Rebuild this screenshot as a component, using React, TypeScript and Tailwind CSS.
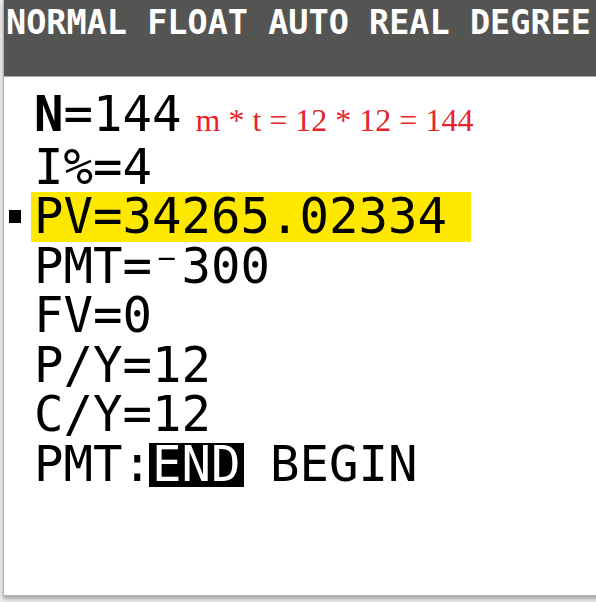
import React from "react";

const mono = { fontFamily: '"DejaVu Sans Mono", "Liberation Mono", monospace' };

const Row = ({ children, marker = false }: { children: React.ReactNode; marker?: boolean }) => (
  <div className="flex h-[49.5px] items-center">
    <div className="w-[30px] shrink-0 pl-[5px]">
      {marker && <div className="h-[13px] w-[12px] bg-black" />}
    </div>
    <div className="whitespace-pre text-[49px] leading-[49.5px] text-black">{children}</div>
  </div>
);

export default function App() {
  return (
    <div className="h-[602px] w-[596px] overflow-hidden bg-[#eeeeee]" style={mono}>
      <div className="ml-[3px] h-[596px] w-[600px] border-b border-l border-[#b3b3b3] bg-white shadow-[0_3px_4px_rgba(0,0,0,0.3)]">
        {/* status bar */}
        <div className="h-[77px] border-b border-[#a9a9a9] bg-[#545553] pl-[2px] pt-[4px]">
          <div className="whitespace-pre text-[33.5px] font-bold leading-[38px] text-white">
            NORMAL FLOAT AUTO REAL DEGREE
          </div>
        </div>

        {/* TVM solver */}
        <div className="pt-[16px]">
          <Row>
            <span className="font-bold">N</span>=144
            <span
              className="ml-[14px] text-[32px] text-[#e8232a]"
              style={{ fontFamily: '"Liberation Serif", "Times New Roman", serif' }}
            >
              m * t = 12 * 12 = 144
            </span>
          </Row>
          <Row>I%=4</Row>
          <Row marker>
            <span className="-ml-[3px] inline-block bg-[#ffe800] pl-[3px] pr-[24px]">PV=34265.02334</span>
          </Row>
          <Row>PMT=⁻300</Row>
          <Row>FV=0</Row>
          <Row>P/Y=12</Row>
          <Row>C/Y=12</Row>
          <Row>
            PMT:
            <span className="-mx-[3px] inline-block bg-black px-[3px] leading-[44px] text-white">END</span> BEGIN
          </Row>
        </div>
      </div>
    </div>
  );
}
